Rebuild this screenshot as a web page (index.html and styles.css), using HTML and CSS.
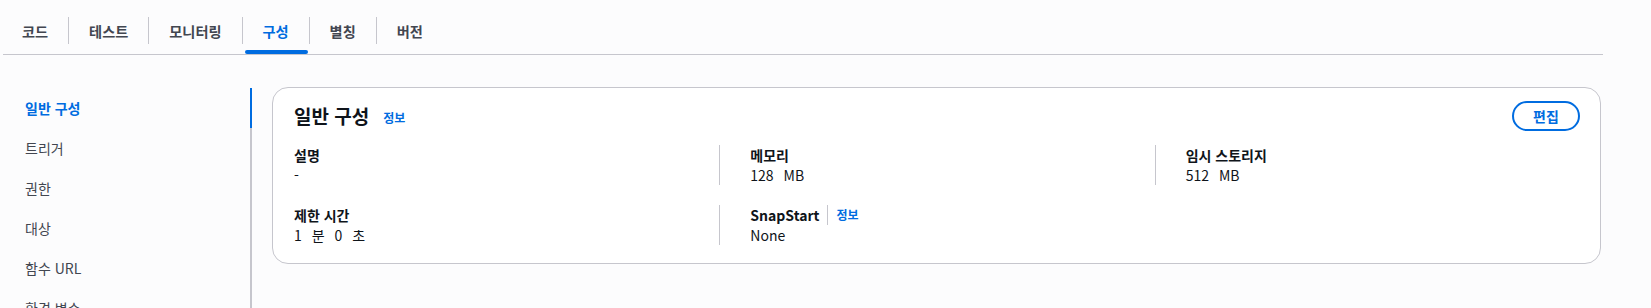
FILE: index.html
```html
<!DOCTYPE html>
<html lang="ko">

<head>
    <meta charset="UTF-8">
    <meta name="viewport" content="width=device-width, initial-scale=1.0">
    <title>구성</title>
    <link rel="stylesheet" href="styles.css">
</head>

<body>
    <div class="tabs">
        <a class="tab">코드</a>
        <a class="tab">테스트</a>
        <a class="tab">모니터링</a>
        <a class="tab active">구성</a>
        <a class="tab">별칭</a>
        <a class="tab">버전</a>
    </div>

    <div class="main">
        <ul class="side-nav">
            <li class="nav-item active">일반 구성</li>
            <li class="nav-item">트리거</li>
            <li class="nav-item">권한</li>
            <li class="nav-item">대상</li>
            <li class="nav-item">함수 URL</li>
            <li class="nav-item">환경 변수</li>
        </ul>

        <div class="card">
            <div class="card-header">
                <div class="title-group">
                    <h2 class="card-title">일반 구성</h2>
                    <a class="info-link">정보</a>
                </div>
                <button class="edit-button">편집</button>
            </div>

            <div class="columns">
                <div class="field">
                    <div class="label">설명</div>
                    <div class="value">-</div>
                </div>
                <div class="field divided">
                    <div class="label">메모리</div>
                    <div class="value spaced">128 MB</div>
                </div>
                <div class="field divided">
                    <div class="label">임시 스토리지</div>
                    <div class="value spaced">512 MB</div>
                </div>
                <div class="field">
                    <div class="label">제한 시간</div>
                    <div class="value spaced">1 분 0 초</div>
                </div>
                <div class="field divided">
                    <div class="label">
                        SnapStart
                        <span class="label-sep"></span>
                        <a class="info-link">정보</a>
                    </div>
                    <div class="value">None</div>
                </div>
            </div>
        </div>
    </div>
</body>

</html>
```

FILE: styles.css
```css
body {
    margin: 0;
    background-color: #fcfcfd;
    color: #0f141a;
    font-family: 'Noto Sans CJK KR', 'Noto Sans', sans-serif;
    font-size: 14px;
    line-height: 20px;
    height: 308px;
    overflow: hidden;
}

.tabs {
    display: flex;
    margin-left: 3px;
    width: 1600px;
    height: 55px;
    border-bottom: 1px solid #c6c6cd;
    padding-top: 17px;
    box-sizing: border-box;
}

.tab {
    position: relative;
    height: 27px;
    line-height: 29px;
    padding: 0 20px;
    font-size: 14.2px;
    font-weight: bold;
    color: #424650;
    cursor: pointer;
}

.tab:first-child {
    padding-left: 19px;
}

.tab + .tab {
    border-left: 1px solid #c6c6cd;
}

.tab.active {
    color: #006ce0;
}

.tab.active::after {
    content: '';
    position: absolute;
    left: 2px;
    right: 1px;
    bottom: -10px;
    height: 4px;
    border-radius: 2px;
    background-color: #006ce0;
}

.main {
    display: flex;
    align-items: flex-start;
    padding-top: 32px;
}

.side-nav {
    list-style: none;
    margin: 1px 0 0 0;
    padding: 0;
    width: 250px;
    border-right: 2px solid #c6c6cd;
}

.nav-item {
    height: 40px;
    line-height: 40px;
    padding-left: 25px;
    color: #424650;
    margin-right: -2px;
    border-right: 2px solid transparent;
}

.nav-item.active {
    color: #006ce0;
    font-weight: bold;
    border-right-color: #006ce0;
}

.card {
    flex: 1;
    margin-left: 20px;
    margin-right: 50px;
    background-color: #fff;
    border: 1px solid #c6c6cd;
    border-radius: 16px;
    padding: 13px 20px 18px 21px;
}

.card-header {
    display: flex;
    justify-content: space-between;
    align-items: center;
    margin-bottom: 14px;
}

.title-group {
    display: flex;
    align-items: center;
    gap: 14px;
}

.card-title {
    margin: 0;
    font-size: 19px;
    line-height: 24px;
    font-weight: bold;
}

.info-link {
    color: #006ce0;
    font-size: 12px;
    font-weight: bold;
    cursor: pointer;
}

.title-group .info-link {
    margin-top: 3px;
}

.edit-button {
    width: 68px;
    height: 30px;
    border: 2px solid #006ce0;
    border-radius: 20px;
    background-color: #fff;
    color: #006ce0;
    font-family: inherit;
    font-size: 14px;
    font-weight: bold;
    cursor: pointer;
}

.columns {
    display: grid;
    grid-template-columns: repeat(3, 1fr);
    row-gap: 20px;
    margin: 0 -10px;
}

.field {
    padding-left: 10px;
}

.field.divided {
    border-left: 1px solid #c6c6cd;
    padding-left: 30px;
}

.label {
    display: flex;
    align-items: center;
    font-weight: bold;
}

.label-sep {
    width: 1px;
    height: 20px;
    background-color: #c6c6cd;
    margin: 0 8px;
}

.value.spaced {
    word-spacing: 6px;
}
```
